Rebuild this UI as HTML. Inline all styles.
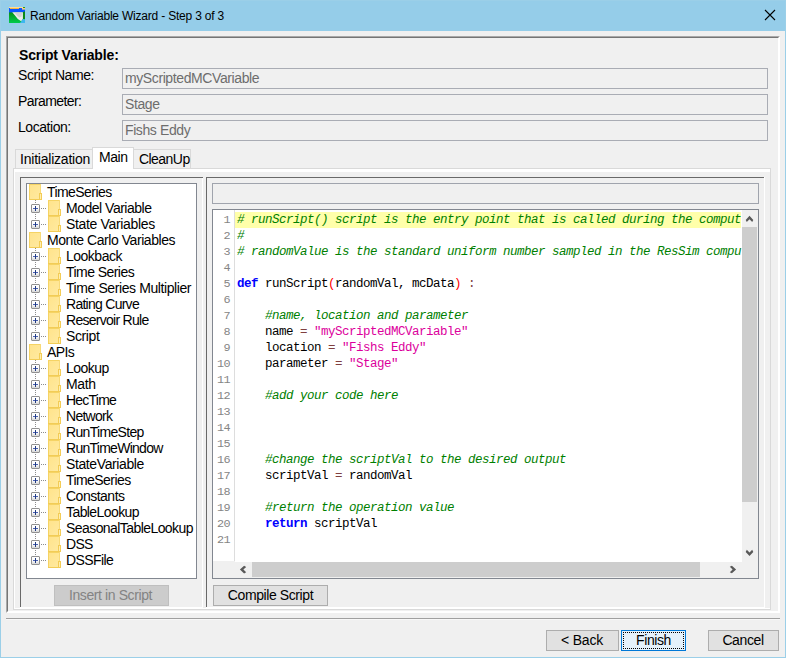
<!DOCTYPE html>
<html><head><meta charset="utf-8"><title>Random Variable Wizard - Step 3 of 3</title>
<style>
html,body{margin:0;padding:0;}
body{width:786px;height:658px;overflow:hidden;position:relative;background:#95cde9;font-family:"Liberation Sans",sans-serif;font-size:14px;letter-spacing:-0.4px;color:#000;}
div,svg{position:absolute;box-sizing:border-box;}
.client{left:1px;top:31px;width:784px;height:626px;background:#f0f0f0;}
.title{left:30px;top:7px;height:18px;line-height:18px;font-size:12px;letter-spacing:-0.2px;white-space:nowrap;}
.lbl{height:16px;line-height:16px;white-space:nowrap;}
.fld{left:122px;width:646px;height:21px;border:1px solid #a9acb4;background:#f0f0f0;color:#6d6d6d;line-height:19px;padding-left:2px;white-space:nowrap;}
.tab{top:149px;height:19px;border:1px solid #d9d9d9;border-bottom:none;background:#f0f0f0;line-height:18px;text-align:left;white-space:nowrap;}
.tl{height:16px;line-height:16px;white-space:nowrap;}
.fi{display:block;}
.dv{width:1px;--c:#8c8c8c;background:repeating-linear-gradient(to bottom,var(--c) 0,var(--c) 1px,transparent 1px,transparent 2px);}
.dh{height:1px;--c:#8c8c8c;background:repeating-linear-gradient(to right,var(--c) 0,var(--c) 1px,transparent 1px,transparent 2px);}
.btn{height:21px;border:1px solid #adadad;background:#e1e1e1;line-height:19px;text-align:center;white-space:nowrap;}
.mono{font-family:"Liberation Mono",monospace;font-size:12.5px;letter-spacing:-0.5px;}
.cl{position:relative;height:16px;line-height:16px;white-space:pre;}
.ln{position:relative;height:16px;line-height:16px;text-align:right;color:#858585;font-size:11.8px;letter-spacing:-0.6px;}
.c{color:#008000;font-style:italic;} .k{color:#0000ff;font-weight:bold;} .s{color:#dc009c;} .p{color:#ff0000;} .o{color:#804040;}
</style></head><body>
<svg style="left:0;top:0" width="0" height="0"><defs>
<linearGradient id="fg" x1="0" y1="0" x2="1" y2="1"><stop offset="0" stop-color="#ffe38a"/><stop offset="1" stop-color="#ffeaa2"/></linearGradient>
<linearGradient id="pg" x1="0" y1="0" x2="0" y2="1"><stop offset="0" stop-color="#ffffff"/><stop offset="0.5" stop-color="#fdfdfd"/><stop offset="1" stop-color="#d6d6d6"/></linearGradient>
</defs></svg>
<!-- title bar -->
<svg style="left:9px;top:7px" width="16" height="16" viewBox="0 0 16 16">
<defs><linearGradient id="ig" x1="0" y1="0" x2="0" y2="1"><stop offset="0.3" stop-color="#078c14"/><stop offset="1" stop-color="#00cc4c"/></linearGradient></defs>
<rect width="16" height="16" fill="url(#ig)"/>
<rect x="0" y="1" width="16" height="4.4" fill="#0a56ff"/>
<rect x="0" y="0" width="14" height="1" fill="#ffdc96"/>
<rect x="1" y="1" width="9" height="1" fill="#f3b544"/>
<rect x="13" y="1" width="3" height="1.6" fill="#ffcc74"/>
<rect x="14" y="0" width="2" height="1" fill="#259c25"/>
<polygon points="13.8,5.3 16,4.2 16,12.3 13.8,12.3" fill="#0a8a14"/>
<path d="M3.2 5.3 L13.9 5.3 L13.9 11.9 L12.2 14.3 Q8.6 12.6 5.6 7.9 Z" fill="#ececec"/>
<path d="M5.4 5.6 L13.2 5.6 L12.6 9.5 L10.2 10.6 Q7.6 8.6 5.4 5.6 Z" fill="#c9c9c9" opacity="0.75"/>
<path d="M12.2 14.3 L13.9 11.9 L16 12.2 L16 16 L10.6 16 Q12.2 15.6 12.2 14.3 Z" fill="#3db7ef"/>
</svg>
<div class="title">Random Variable Wizard - Step 3 of 3</div>
<svg style="left:764px;top:9px" width="12" height="12" viewBox="0 0 12 12"><path d="M1 1 L11 11 M11 1 L1 11" stroke="#000" stroke-width="1.1" fill="none"/></svg>

<div class="client"></div>
<div style="left:0;top:0;width:786px;height:658px;border:1px solid #9bcfe8;"></div>

<!-- outer lowered bevel -->
<div style="left:6px;top:36px;width:774px;height:577px;border-left:1px solid #a8a8a8;border-top:1px solid #a8a8a8;border-right:1px solid #fff;border-bottom:1px solid #fff;"></div>
<div style="left:7px;top:37px;width:772px;height:575px;border-left:1px solid #757575;border-top:1px solid #757575;border-right:1px solid #fff;border-bottom:1px solid #fff;"></div>

<div class="lbl" style="left:19px;top:47px;font-weight:bold;letter-spacing:-0.14px;">Script Variable:</div>
<div class="lbl" style="left:18px;top:67px;">Script Name:</div>
<div class="lbl" style="left:18px;top:93px;letter-spacing:-0.6px;">Parameter:</div>
<div class="lbl" style="left:18px;top:119px;letter-spacing:-0.45px;">Location:</div>
<div class="fld" style="top:68px;">myScriptedMCVariable</div>
<div class="fld" style="top:94px;">Stage</div>
<div class="fld" style="top:120px;">Fishs Eddy</div>

<!-- tabbed pane -->
<div style="left:13px;top:168px;width:758px;height:442px;border:1px solid #d9d9d9;background:#fff;"></div>
<div style="left:15px;top:172px;width:755px;height:436px;background:#f0f0f0;"></div>
<div class="tab" style="left:15px;width:78px;padding-left:4px;letter-spacing:-0.22px;">Initialization</div>
<div class="tab" style="left:134px;width:57px;padding-left:5px;border-left:none;letter-spacing:-0.55px;">CleanUp</div>
<div class="tab" style="left:92px;top:147px;width:42px;height:22px;background:#fff;line-height:19px;padding-left:6px;letter-spacing:-0.45px;">Main</div>

<!-- left panel (tree) -->
<div style="left:20px;top:607px;width:183px;height:1px;background:#fff;"></div>
<div style="left:202px;top:178px;width:1px;height:430px;background:#fff;"></div>
<div style="left:20px;top:177px;width:183px;height:1px;background:#696969;"></div>
<div style="left:20px;top:177px;width:1px;height:430px;background:#696969;"></div>
<div style="left:26px;top:183px;width:171px;height:396px;border:1px solid #828790;background:#fff;"></div>
<svg class="fi" style="left:29px;top:184px" width="13" height="16" viewBox="0 0 13 16"><rect x="0" y="0" width="12" height="16" fill="url(#fg)"/><rect x="0" y="0" width="12" height="1" fill="#f5d364"/><rect x="0" y="0" width="1" height="16" fill="#f5d364"/><rect x="11" y="0" width="1" height="9" fill="#f8da78"/><rect x="0" y="15" width="12" height="1" fill="#f2cc56"/><rect x="10" y="9" width="3" height="7" fill="#f3cc56"/><rect x="11" y="10" width="1" height="5" fill="#ffeeb0"/></svg>
<div class="tl" style="left:47px;top:184px;letter-spacing:-0.57px">TimeSeries</div>
<svg class="fi" style="left:48px;top:200px" width="13" height="16" viewBox="0 0 13 16"><rect x="0" y="0" width="12" height="16" fill="url(#fg)"/><rect x="0" y="0" width="12" height="1" fill="#f5d364"/><rect x="0" y="0" width="1" height="16" fill="#f5d364"/><rect x="11" y="0" width="1" height="9" fill="#f8da78"/><rect x="0" y="15" width="12" height="1" fill="#f2cc56"/><rect x="10" y="9" width="3" height="7" fill="#f3cc56"/><rect x="11" y="10" width="1" height="5" fill="#ffeeb0"/></svg>
<div class="tl" style="left:66px;top:200px;letter-spacing:-0.49px">Model Variable</div>
<svg class="fi" style="left:31px;top:204px" width="9" height="9" viewBox="0 0 9 9"><rect x="1" y="1" width="7" height="7" fill="url(#pg)"/><rect x="1" y="0" width="7" height="1" fill="#919191"/><rect x="1" y="8" width="7" height="1" fill="#919191"/><rect x="0" y="1" width="1" height="7" fill="#919191"/><rect x="8" y="1" width="1" height="7" fill="#919191"/><rect x="0" y="0" width="1" height="1" fill="#c9c9c9"/><rect x="8" y="0" width="1" height="1" fill="#c9c9c9"/><rect x="0" y="8" width="1" height="1" fill="#c9c9c9"/><rect x="8" y="8" width="1" height="1" fill="#c9c9c9"/><rect x="2" y="4" width="5" height="1" fill="#4a61b5"/><rect x="4" y="2" width="1" height="5" fill="#1f3a80"/></svg>
<div class="dv" style="left:35px;top:200px;height:4px"></div>
<div class="dv" style="left:35px;top:214px;height:1px"></div>
<div class="dh" style="left:41px;top:208px;width:6px"></div>
<svg class="fi" style="left:48px;top:216px" width="13" height="16" viewBox="0 0 13 16"><rect x="0" y="0" width="12" height="16" fill="url(#fg)"/><rect x="0" y="0" width="12" height="1" fill="#f5d364"/><rect x="0" y="0" width="1" height="16" fill="#f5d364"/><rect x="11" y="0" width="1" height="9" fill="#f8da78"/><rect x="0" y="15" width="12" height="1" fill="#f2cc56"/><rect x="10" y="9" width="3" height="7" fill="#f3cc56"/><rect x="11" y="10" width="1" height="5" fill="#ffeeb0"/></svg>
<div class="tl" style="left:66px;top:216px;letter-spacing:-0.34px">State Variables</div>
<svg class="fi" style="left:31px;top:220px" width="9" height="9" viewBox="0 0 9 9"><rect x="1" y="1" width="7" height="7" fill="url(#pg)"/><rect x="1" y="0" width="7" height="1" fill="#919191"/><rect x="1" y="8" width="7" height="1" fill="#919191"/><rect x="0" y="1" width="1" height="7" fill="#919191"/><rect x="8" y="1" width="1" height="7" fill="#919191"/><rect x="0" y="0" width="1" height="1" fill="#c9c9c9"/><rect x="8" y="0" width="1" height="1" fill="#c9c9c9"/><rect x="0" y="8" width="1" height="1" fill="#c9c9c9"/><rect x="8" y="8" width="1" height="1" fill="#c9c9c9"/><rect x="2" y="4" width="5" height="1" fill="#4a61b5"/><rect x="4" y="2" width="1" height="5" fill="#1f3a80"/></svg>
<div class="dv" style="left:35px;top:216px;height:4px"></div>
<div class="dh" style="left:41px;top:224px;width:6px"></div>
<svg class="fi" style="left:29px;top:232px" width="13" height="16" viewBox="0 0 13 16"><rect x="0" y="0" width="12" height="16" fill="url(#fg)"/><rect x="0" y="0" width="12" height="1" fill="#f5d364"/><rect x="0" y="0" width="1" height="16" fill="#f5d364"/><rect x="11" y="0" width="1" height="9" fill="#f8da78"/><rect x="0" y="15" width="12" height="1" fill="#f2cc56"/><rect x="10" y="9" width="3" height="7" fill="#f3cc56"/><rect x="11" y="10" width="1" height="5" fill="#ffeeb0"/></svg>
<div class="tl" style="left:47px;top:232px;letter-spacing:-0.45px">Monte Carlo Variables</div>
<svg class="fi" style="left:48px;top:248px" width="13" height="16" viewBox="0 0 13 16"><rect x="0" y="0" width="12" height="16" fill="url(#fg)"/><rect x="0" y="0" width="12" height="1" fill="#f5d364"/><rect x="0" y="0" width="1" height="16" fill="#f5d364"/><rect x="11" y="0" width="1" height="9" fill="#f8da78"/><rect x="0" y="15" width="12" height="1" fill="#f2cc56"/><rect x="10" y="9" width="3" height="7" fill="#f3cc56"/><rect x="11" y="10" width="1" height="5" fill="#ffeeb0"/></svg>
<div class="tl" style="left:66px;top:248px;letter-spacing:-0.50px">Lookback</div>
<svg class="fi" style="left:31px;top:252px" width="9" height="9" viewBox="0 0 9 9"><rect x="1" y="1" width="7" height="7" fill="url(#pg)"/><rect x="1" y="0" width="7" height="1" fill="#919191"/><rect x="1" y="8" width="7" height="1" fill="#919191"/><rect x="0" y="1" width="1" height="7" fill="#919191"/><rect x="8" y="1" width="1" height="7" fill="#919191"/><rect x="0" y="0" width="1" height="1" fill="#c9c9c9"/><rect x="8" y="0" width="1" height="1" fill="#c9c9c9"/><rect x="0" y="8" width="1" height="1" fill="#c9c9c9"/><rect x="8" y="8" width="1" height="1" fill="#c9c9c9"/><rect x="2" y="4" width="5" height="1" fill="#4a61b5"/><rect x="4" y="2" width="1" height="5" fill="#1f3a80"/></svg>
<div class="dv" style="left:35px;top:248px;height:4px"></div>
<div class="dv" style="left:35px;top:262px;height:1px"></div>
<div class="dh" style="left:41px;top:256px;width:6px"></div>
<svg class="fi" style="left:48px;top:264px" width="13" height="16" viewBox="0 0 13 16"><rect x="0" y="0" width="12" height="16" fill="url(#fg)"/><rect x="0" y="0" width="12" height="1" fill="#f5d364"/><rect x="0" y="0" width="1" height="16" fill="#f5d364"/><rect x="11" y="0" width="1" height="9" fill="#f8da78"/><rect x="0" y="15" width="12" height="1" fill="#f2cc56"/><rect x="10" y="9" width="3" height="7" fill="#f3cc56"/><rect x="11" y="10" width="1" height="5" fill="#ffeeb0"/></svg>
<div class="tl" style="left:66px;top:264px;letter-spacing:-0.55px">Time Series</div>
<svg class="fi" style="left:31px;top:268px" width="9" height="9" viewBox="0 0 9 9"><rect x="1" y="1" width="7" height="7" fill="url(#pg)"/><rect x="1" y="0" width="7" height="1" fill="#919191"/><rect x="1" y="8" width="7" height="1" fill="#919191"/><rect x="0" y="1" width="1" height="7" fill="#919191"/><rect x="8" y="1" width="1" height="7" fill="#919191"/><rect x="0" y="0" width="1" height="1" fill="#c9c9c9"/><rect x="8" y="0" width="1" height="1" fill="#c9c9c9"/><rect x="0" y="8" width="1" height="1" fill="#c9c9c9"/><rect x="8" y="8" width="1" height="1" fill="#c9c9c9"/><rect x="2" y="4" width="5" height="1" fill="#4a61b5"/><rect x="4" y="2" width="1" height="5" fill="#1f3a80"/></svg>
<div class="dv" style="left:35px;top:264px;height:4px"></div>
<div class="dv" style="left:35px;top:278px;height:1px"></div>
<div class="dh" style="left:41px;top:272px;width:6px"></div>
<svg class="fi" style="left:48px;top:280px" width="13" height="16" viewBox="0 0 13 16"><rect x="0" y="0" width="12" height="16" fill="url(#fg)"/><rect x="0" y="0" width="12" height="1" fill="#f5d364"/><rect x="0" y="0" width="1" height="16" fill="#f5d364"/><rect x="11" y="0" width="1" height="9" fill="#f8da78"/><rect x="0" y="15" width="12" height="1" fill="#f2cc56"/><rect x="10" y="9" width="3" height="7" fill="#f3cc56"/><rect x="11" y="10" width="1" height="5" fill="#ffeeb0"/></svg>
<div class="tl" style="left:66px;top:280px;letter-spacing:-0.41px">Time Series Multiplier</div>
<svg class="fi" style="left:31px;top:284px" width="9" height="9" viewBox="0 0 9 9"><rect x="1" y="1" width="7" height="7" fill="url(#pg)"/><rect x="1" y="0" width="7" height="1" fill="#919191"/><rect x="1" y="8" width="7" height="1" fill="#919191"/><rect x="0" y="1" width="1" height="7" fill="#919191"/><rect x="8" y="1" width="1" height="7" fill="#919191"/><rect x="0" y="0" width="1" height="1" fill="#c9c9c9"/><rect x="8" y="0" width="1" height="1" fill="#c9c9c9"/><rect x="0" y="8" width="1" height="1" fill="#c9c9c9"/><rect x="8" y="8" width="1" height="1" fill="#c9c9c9"/><rect x="2" y="4" width="5" height="1" fill="#4a61b5"/><rect x="4" y="2" width="1" height="5" fill="#1f3a80"/></svg>
<div class="dv" style="left:35px;top:280px;height:4px"></div>
<div class="dv" style="left:35px;top:294px;height:1px"></div>
<div class="dh" style="left:41px;top:288px;width:6px"></div>
<svg class="fi" style="left:48px;top:296px" width="13" height="16" viewBox="0 0 13 16"><rect x="0" y="0" width="12" height="16" fill="url(#fg)"/><rect x="0" y="0" width="12" height="1" fill="#f5d364"/><rect x="0" y="0" width="1" height="16" fill="#f5d364"/><rect x="11" y="0" width="1" height="9" fill="#f8da78"/><rect x="0" y="15" width="12" height="1" fill="#f2cc56"/><rect x="10" y="9" width="3" height="7" fill="#f3cc56"/><rect x="11" y="10" width="1" height="5" fill="#ffeeb0"/></svg>
<div class="tl" style="left:66px;top:296px;letter-spacing:-0.73px">Rating Curve</div>
<svg class="fi" style="left:31px;top:300px" width="9" height="9" viewBox="0 0 9 9"><rect x="1" y="1" width="7" height="7" fill="url(#pg)"/><rect x="1" y="0" width="7" height="1" fill="#919191"/><rect x="1" y="8" width="7" height="1" fill="#919191"/><rect x="0" y="1" width="1" height="7" fill="#919191"/><rect x="8" y="1" width="1" height="7" fill="#919191"/><rect x="0" y="0" width="1" height="1" fill="#c9c9c9"/><rect x="8" y="0" width="1" height="1" fill="#c9c9c9"/><rect x="0" y="8" width="1" height="1" fill="#c9c9c9"/><rect x="8" y="8" width="1" height="1" fill="#c9c9c9"/><rect x="2" y="4" width="5" height="1" fill="#4a61b5"/><rect x="4" y="2" width="1" height="5" fill="#1f3a80"/></svg>
<div class="dv" style="left:35px;top:296px;height:4px"></div>
<div class="dv" style="left:35px;top:310px;height:1px"></div>
<div class="dh" style="left:41px;top:304px;width:6px"></div>
<svg class="fi" style="left:48px;top:312px" width="13" height="16" viewBox="0 0 13 16"><rect x="0" y="0" width="12" height="16" fill="url(#fg)"/><rect x="0" y="0" width="12" height="1" fill="#f5d364"/><rect x="0" y="0" width="1" height="16" fill="#f5d364"/><rect x="11" y="0" width="1" height="9" fill="#f8da78"/><rect x="0" y="15" width="12" height="1" fill="#f2cc56"/><rect x="10" y="9" width="3" height="7" fill="#f3cc56"/><rect x="11" y="10" width="1" height="5" fill="#ffeeb0"/></svg>
<div class="tl" style="left:66px;top:312px;letter-spacing:-0.72px">Reservoir Rule</div>
<svg class="fi" style="left:31px;top:316px" width="9" height="9" viewBox="0 0 9 9"><rect x="1" y="1" width="7" height="7" fill="url(#pg)"/><rect x="1" y="0" width="7" height="1" fill="#919191"/><rect x="1" y="8" width="7" height="1" fill="#919191"/><rect x="0" y="1" width="1" height="7" fill="#919191"/><rect x="8" y="1" width="1" height="7" fill="#919191"/><rect x="0" y="0" width="1" height="1" fill="#c9c9c9"/><rect x="8" y="0" width="1" height="1" fill="#c9c9c9"/><rect x="0" y="8" width="1" height="1" fill="#c9c9c9"/><rect x="8" y="8" width="1" height="1" fill="#c9c9c9"/><rect x="2" y="4" width="5" height="1" fill="#4a61b5"/><rect x="4" y="2" width="1" height="5" fill="#1f3a80"/></svg>
<div class="dv" style="left:35px;top:312px;height:4px"></div>
<div class="dv" style="left:35px;top:326px;height:1px"></div>
<div class="dh" style="left:41px;top:320px;width:6px"></div>
<svg class="fi" style="left:48px;top:328px" width="13" height="16" viewBox="0 0 13 16"><rect x="0" y="0" width="12" height="16" fill="url(#fg)"/><rect x="0" y="0" width="12" height="1" fill="#f5d364"/><rect x="0" y="0" width="1" height="16" fill="#f5d364"/><rect x="11" y="0" width="1" height="9" fill="#f8da78"/><rect x="0" y="15" width="12" height="1" fill="#f2cc56"/><rect x="10" y="9" width="3" height="7" fill="#f3cc56"/><rect x="11" y="10" width="1" height="5" fill="#ffeeb0"/></svg>
<div class="tl" style="left:66px;top:328px;letter-spacing:-0.38px">Script</div>
<svg class="fi" style="left:31px;top:332px" width="9" height="9" viewBox="0 0 9 9"><rect x="1" y="1" width="7" height="7" fill="url(#pg)"/><rect x="1" y="0" width="7" height="1" fill="#919191"/><rect x="1" y="8" width="7" height="1" fill="#919191"/><rect x="0" y="1" width="1" height="7" fill="#919191"/><rect x="8" y="1" width="1" height="7" fill="#919191"/><rect x="0" y="0" width="1" height="1" fill="#c9c9c9"/><rect x="8" y="0" width="1" height="1" fill="#c9c9c9"/><rect x="0" y="8" width="1" height="1" fill="#c9c9c9"/><rect x="8" y="8" width="1" height="1" fill="#c9c9c9"/><rect x="2" y="4" width="5" height="1" fill="#4a61b5"/><rect x="4" y="2" width="1" height="5" fill="#1f3a80"/></svg>
<div class="dv" style="left:35px;top:328px;height:4px"></div>
<div class="dh" style="left:41px;top:336px;width:6px"></div>
<svg class="fi" style="left:29px;top:344px" width="13" height="16" viewBox="0 0 13 16"><rect x="0" y="0" width="12" height="16" fill="url(#fg)"/><rect x="0" y="0" width="12" height="1" fill="#f5d364"/><rect x="0" y="0" width="1" height="16" fill="#f5d364"/><rect x="11" y="0" width="1" height="9" fill="#f8da78"/><rect x="0" y="15" width="12" height="1" fill="#f2cc56"/><rect x="10" y="9" width="3" height="7" fill="#f3cc56"/><rect x="11" y="10" width="1" height="5" fill="#ffeeb0"/></svg>
<div class="tl" style="left:47px;top:344px;letter-spacing:-0.57px">APIs</div>
<svg class="fi" style="left:48px;top:360px" width="13" height="16" viewBox="0 0 13 16"><rect x="0" y="0" width="12" height="16" fill="url(#fg)"/><rect x="0" y="0" width="12" height="1" fill="#f5d364"/><rect x="0" y="0" width="1" height="16" fill="#f5d364"/><rect x="11" y="0" width="1" height="9" fill="#f8da78"/><rect x="0" y="15" width="12" height="1" fill="#f2cc56"/><rect x="10" y="9" width="3" height="7" fill="#f3cc56"/><rect x="11" y="10" width="1" height="5" fill="#ffeeb0"/></svg>
<div class="tl" style="left:66px;top:360px;letter-spacing:-0.54px">Lookup</div>
<svg class="fi" style="left:31px;top:364px" width="9" height="9" viewBox="0 0 9 9"><rect x="1" y="1" width="7" height="7" fill="url(#pg)"/><rect x="1" y="0" width="7" height="1" fill="#919191"/><rect x="1" y="8" width="7" height="1" fill="#919191"/><rect x="0" y="1" width="1" height="7" fill="#919191"/><rect x="8" y="1" width="1" height="7" fill="#919191"/><rect x="0" y="0" width="1" height="1" fill="#c9c9c9"/><rect x="8" y="0" width="1" height="1" fill="#c9c9c9"/><rect x="0" y="8" width="1" height="1" fill="#c9c9c9"/><rect x="8" y="8" width="1" height="1" fill="#c9c9c9"/><rect x="2" y="4" width="5" height="1" fill="#4a61b5"/><rect x="4" y="2" width="1" height="5" fill="#1f3a80"/></svg>
<div class="dv" style="left:35px;top:360px;height:4px"></div>
<div class="dv" style="left:35px;top:374px;height:1px"></div>
<div class="dh" style="left:41px;top:368px;width:6px"></div>
<svg class="fi" style="left:48px;top:376px" width="13" height="16" viewBox="0 0 13 16"><rect x="0" y="0" width="12" height="16" fill="url(#fg)"/><rect x="0" y="0" width="12" height="1" fill="#f5d364"/><rect x="0" y="0" width="1" height="16" fill="#f5d364"/><rect x="11" y="0" width="1" height="9" fill="#f8da78"/><rect x="0" y="15" width="12" height="1" fill="#f2cc56"/><rect x="10" y="9" width="3" height="7" fill="#f3cc56"/><rect x="11" y="10" width="1" height="5" fill="#ffeeb0"/></svg>
<div class="tl" style="left:66px;top:376px;letter-spacing:-0.37px">Math</div>
<svg class="fi" style="left:31px;top:380px" width="9" height="9" viewBox="0 0 9 9"><rect x="1" y="1" width="7" height="7" fill="url(#pg)"/><rect x="1" y="0" width="7" height="1" fill="#919191"/><rect x="1" y="8" width="7" height="1" fill="#919191"/><rect x="0" y="1" width="1" height="7" fill="#919191"/><rect x="8" y="1" width="1" height="7" fill="#919191"/><rect x="0" y="0" width="1" height="1" fill="#c9c9c9"/><rect x="8" y="0" width="1" height="1" fill="#c9c9c9"/><rect x="0" y="8" width="1" height="1" fill="#c9c9c9"/><rect x="8" y="8" width="1" height="1" fill="#c9c9c9"/><rect x="2" y="4" width="5" height="1" fill="#4a61b5"/><rect x="4" y="2" width="1" height="5" fill="#1f3a80"/></svg>
<div class="dv" style="left:35px;top:376px;height:4px"></div>
<div class="dv" style="left:35px;top:390px;height:1px"></div>
<div class="dh" style="left:41px;top:384px;width:6px"></div>
<svg class="fi" style="left:48px;top:392px" width="13" height="16" viewBox="0 0 13 16"><rect x="0" y="0" width="12" height="16" fill="url(#fg)"/><rect x="0" y="0" width="12" height="1" fill="#f5d364"/><rect x="0" y="0" width="1" height="16" fill="#f5d364"/><rect x="11" y="0" width="1" height="9" fill="#f8da78"/><rect x="0" y="15" width="12" height="1" fill="#f2cc56"/><rect x="10" y="9" width="3" height="7" fill="#f3cc56"/><rect x="11" y="10" width="1" height="5" fill="#ffeeb0"/></svg>
<div class="tl" style="left:66px;top:392px;letter-spacing:-0.77px">HecTime</div>
<svg class="fi" style="left:31px;top:396px" width="9" height="9" viewBox="0 0 9 9"><rect x="1" y="1" width="7" height="7" fill="url(#pg)"/><rect x="1" y="0" width="7" height="1" fill="#919191"/><rect x="1" y="8" width="7" height="1" fill="#919191"/><rect x="0" y="1" width="1" height="7" fill="#919191"/><rect x="8" y="1" width="1" height="7" fill="#919191"/><rect x="0" y="0" width="1" height="1" fill="#c9c9c9"/><rect x="8" y="0" width="1" height="1" fill="#c9c9c9"/><rect x="0" y="8" width="1" height="1" fill="#c9c9c9"/><rect x="8" y="8" width="1" height="1" fill="#c9c9c9"/><rect x="2" y="4" width="5" height="1" fill="#4a61b5"/><rect x="4" y="2" width="1" height="5" fill="#1f3a80"/></svg>
<div class="dv" style="left:35px;top:392px;height:4px"></div>
<div class="dv" style="left:35px;top:406px;height:1px"></div>
<div class="dh" style="left:41px;top:400px;width:6px"></div>
<svg class="fi" style="left:48px;top:408px" width="13" height="16" viewBox="0 0 13 16"><rect x="0" y="0" width="12" height="16" fill="url(#fg)"/><rect x="0" y="0" width="12" height="1" fill="#f5d364"/><rect x="0" y="0" width="1" height="16" fill="#f5d364"/><rect x="11" y="0" width="1" height="9" fill="#f8da78"/><rect x="0" y="15" width="12" height="1" fill="#f2cc56"/><rect x="10" y="9" width="3" height="7" fill="#f3cc56"/><rect x="11" y="10" width="1" height="5" fill="#ffeeb0"/></svg>
<div class="tl" style="left:66px;top:408px;letter-spacing:-0.73px">Network</div>
<svg class="fi" style="left:31px;top:412px" width="9" height="9" viewBox="0 0 9 9"><rect x="1" y="1" width="7" height="7" fill="url(#pg)"/><rect x="1" y="0" width="7" height="1" fill="#919191"/><rect x="1" y="8" width="7" height="1" fill="#919191"/><rect x="0" y="1" width="1" height="7" fill="#919191"/><rect x="8" y="1" width="1" height="7" fill="#919191"/><rect x="0" y="0" width="1" height="1" fill="#c9c9c9"/><rect x="8" y="0" width="1" height="1" fill="#c9c9c9"/><rect x="0" y="8" width="1" height="1" fill="#c9c9c9"/><rect x="8" y="8" width="1" height="1" fill="#c9c9c9"/><rect x="2" y="4" width="5" height="1" fill="#4a61b5"/><rect x="4" y="2" width="1" height="5" fill="#1f3a80"/></svg>
<div class="dv" style="left:35px;top:408px;height:4px"></div>
<div class="dv" style="left:35px;top:422px;height:1px"></div>
<div class="dh" style="left:41px;top:416px;width:6px"></div>
<svg class="fi" style="left:48px;top:424px" width="13" height="16" viewBox="0 0 13 16"><rect x="0" y="0" width="12" height="16" fill="url(#fg)"/><rect x="0" y="0" width="12" height="1" fill="#f5d364"/><rect x="0" y="0" width="1" height="16" fill="#f5d364"/><rect x="11" y="0" width="1" height="9" fill="#f8da78"/><rect x="0" y="15" width="12" height="1" fill="#f2cc56"/><rect x="10" y="9" width="3" height="7" fill="#f3cc56"/><rect x="11" y="10" width="1" height="5" fill="#ffeeb0"/></svg>
<div class="tl" style="left:66px;top:424px;letter-spacing:-0.67px">RunTimeStep</div>
<svg class="fi" style="left:31px;top:428px" width="9" height="9" viewBox="0 0 9 9"><rect x="1" y="1" width="7" height="7" fill="url(#pg)"/><rect x="1" y="0" width="7" height="1" fill="#919191"/><rect x="1" y="8" width="7" height="1" fill="#919191"/><rect x="0" y="1" width="1" height="7" fill="#919191"/><rect x="8" y="1" width="1" height="7" fill="#919191"/><rect x="0" y="0" width="1" height="1" fill="#c9c9c9"/><rect x="8" y="0" width="1" height="1" fill="#c9c9c9"/><rect x="0" y="8" width="1" height="1" fill="#c9c9c9"/><rect x="8" y="8" width="1" height="1" fill="#c9c9c9"/><rect x="2" y="4" width="5" height="1" fill="#4a61b5"/><rect x="4" y="2" width="1" height="5" fill="#1f3a80"/></svg>
<div class="dv" style="left:35px;top:424px;height:4px"></div>
<div class="dv" style="left:35px;top:438px;height:1px"></div>
<div class="dh" style="left:41px;top:432px;width:6px"></div>
<svg class="fi" style="left:48px;top:440px" width="13" height="16" viewBox="0 0 13 16"><rect x="0" y="0" width="12" height="16" fill="url(#fg)"/><rect x="0" y="0" width="12" height="1" fill="#f5d364"/><rect x="0" y="0" width="1" height="16" fill="#f5d364"/><rect x="11" y="0" width="1" height="9" fill="#f8da78"/><rect x="0" y="15" width="12" height="1" fill="#f2cc56"/><rect x="10" y="9" width="3" height="7" fill="#f3cc56"/><rect x="11" y="10" width="1" height="5" fill="#ffeeb0"/></svg>
<div class="tl" style="left:66px;top:440px;letter-spacing:-0.73px">RunTimeWindow</div>
<svg class="fi" style="left:31px;top:444px" width="9" height="9" viewBox="0 0 9 9"><rect x="1" y="1" width="7" height="7" fill="url(#pg)"/><rect x="1" y="0" width="7" height="1" fill="#919191"/><rect x="1" y="8" width="7" height="1" fill="#919191"/><rect x="0" y="1" width="1" height="7" fill="#919191"/><rect x="8" y="1" width="1" height="7" fill="#919191"/><rect x="0" y="0" width="1" height="1" fill="#c9c9c9"/><rect x="8" y="0" width="1" height="1" fill="#c9c9c9"/><rect x="0" y="8" width="1" height="1" fill="#c9c9c9"/><rect x="8" y="8" width="1" height="1" fill="#c9c9c9"/><rect x="2" y="4" width="5" height="1" fill="#4a61b5"/><rect x="4" y="2" width="1" height="5" fill="#1f3a80"/></svg>
<div class="dv" style="left:35px;top:440px;height:4px"></div>
<div class="dv" style="left:35px;top:454px;height:1px"></div>
<div class="dh" style="left:41px;top:448px;width:6px"></div>
<svg class="fi" style="left:48px;top:456px" width="13" height="16" viewBox="0 0 13 16"><rect x="0" y="0" width="12" height="16" fill="url(#fg)"/><rect x="0" y="0" width="12" height="1" fill="#f5d364"/><rect x="0" y="0" width="1" height="16" fill="#f5d364"/><rect x="11" y="0" width="1" height="9" fill="#f8da78"/><rect x="0" y="15" width="12" height="1" fill="#f2cc56"/><rect x="10" y="9" width="3" height="7" fill="#f3cc56"/><rect x="11" y="10" width="1" height="5" fill="#ffeeb0"/></svg>
<div class="tl" style="left:66px;top:456px;letter-spacing:-0.39px">StateVariable</div>
<svg class="fi" style="left:31px;top:460px" width="9" height="9" viewBox="0 0 9 9"><rect x="1" y="1" width="7" height="7" fill="url(#pg)"/><rect x="1" y="0" width="7" height="1" fill="#919191"/><rect x="1" y="8" width="7" height="1" fill="#919191"/><rect x="0" y="1" width="1" height="7" fill="#919191"/><rect x="8" y="1" width="1" height="7" fill="#919191"/><rect x="0" y="0" width="1" height="1" fill="#c9c9c9"/><rect x="8" y="0" width="1" height="1" fill="#c9c9c9"/><rect x="0" y="8" width="1" height="1" fill="#c9c9c9"/><rect x="8" y="8" width="1" height="1" fill="#c9c9c9"/><rect x="2" y="4" width="5" height="1" fill="#4a61b5"/><rect x="4" y="2" width="1" height="5" fill="#1f3a80"/></svg>
<div class="dv" style="left:35px;top:456px;height:4px"></div>
<div class="dv" style="left:35px;top:470px;height:1px"></div>
<div class="dh" style="left:41px;top:464px;width:6px"></div>
<svg class="fi" style="left:48px;top:472px" width="13" height="16" viewBox="0 0 13 16"><rect x="0" y="0" width="12" height="16" fill="url(#fg)"/><rect x="0" y="0" width="12" height="1" fill="#f5d364"/><rect x="0" y="0" width="1" height="16" fill="#f5d364"/><rect x="11" y="0" width="1" height="9" fill="#f8da78"/><rect x="0" y="15" width="12" height="1" fill="#f2cc56"/><rect x="10" y="9" width="3" height="7" fill="#f3cc56"/><rect x="11" y="10" width="1" height="5" fill="#ffeeb0"/></svg>
<div class="tl" style="left:66px;top:472px;letter-spacing:-0.57px">TimeSeries</div>
<svg class="fi" style="left:31px;top:476px" width="9" height="9" viewBox="0 0 9 9"><rect x="1" y="1" width="7" height="7" fill="url(#pg)"/><rect x="1" y="0" width="7" height="1" fill="#919191"/><rect x="1" y="8" width="7" height="1" fill="#919191"/><rect x="0" y="1" width="1" height="7" fill="#919191"/><rect x="8" y="1" width="1" height="7" fill="#919191"/><rect x="0" y="0" width="1" height="1" fill="#c9c9c9"/><rect x="8" y="0" width="1" height="1" fill="#c9c9c9"/><rect x="0" y="8" width="1" height="1" fill="#c9c9c9"/><rect x="8" y="8" width="1" height="1" fill="#c9c9c9"/><rect x="2" y="4" width="5" height="1" fill="#4a61b5"/><rect x="4" y="2" width="1" height="5" fill="#1f3a80"/></svg>
<div class="dv" style="left:35px;top:472px;height:4px"></div>
<div class="dv" style="left:35px;top:486px;height:1px"></div>
<div class="dh" style="left:41px;top:480px;width:6px"></div>
<svg class="fi" style="left:48px;top:488px" width="13" height="16" viewBox="0 0 13 16"><rect x="0" y="0" width="12" height="16" fill="url(#fg)"/><rect x="0" y="0" width="12" height="1" fill="#f5d364"/><rect x="0" y="0" width="1" height="16" fill="#f5d364"/><rect x="11" y="0" width="1" height="9" fill="#f8da78"/><rect x="0" y="15" width="12" height="1" fill="#f2cc56"/><rect x="10" y="9" width="3" height="7" fill="#f3cc56"/><rect x="11" y="10" width="1" height="5" fill="#ffeeb0"/></svg>
<div class="tl" style="left:66px;top:488px;letter-spacing:-0.50px">Constants</div>
<svg class="fi" style="left:31px;top:492px" width="9" height="9" viewBox="0 0 9 9"><rect x="1" y="1" width="7" height="7" fill="url(#pg)"/><rect x="1" y="0" width="7" height="1" fill="#919191"/><rect x="1" y="8" width="7" height="1" fill="#919191"/><rect x="0" y="1" width="1" height="7" fill="#919191"/><rect x="8" y="1" width="1" height="7" fill="#919191"/><rect x="0" y="0" width="1" height="1" fill="#c9c9c9"/><rect x="8" y="0" width="1" height="1" fill="#c9c9c9"/><rect x="0" y="8" width="1" height="1" fill="#c9c9c9"/><rect x="8" y="8" width="1" height="1" fill="#c9c9c9"/><rect x="2" y="4" width="5" height="1" fill="#4a61b5"/><rect x="4" y="2" width="1" height="5" fill="#1f3a80"/></svg>
<div class="dv" style="left:35px;top:488px;height:4px"></div>
<div class="dv" style="left:35px;top:502px;height:1px"></div>
<div class="dh" style="left:41px;top:496px;width:6px"></div>
<svg class="fi" style="left:48px;top:504px" width="13" height="16" viewBox="0 0 13 16"><rect x="0" y="0" width="12" height="16" fill="url(#fg)"/><rect x="0" y="0" width="12" height="1" fill="#f5d364"/><rect x="0" y="0" width="1" height="16" fill="#f5d364"/><rect x="11" y="0" width="1" height="9" fill="#f8da78"/><rect x="0" y="15" width="12" height="1" fill="#f2cc56"/><rect x="10" y="9" width="3" height="7" fill="#f3cc56"/><rect x="11" y="10" width="1" height="5" fill="#ffeeb0"/></svg>
<div class="tl" style="left:66px;top:504px;letter-spacing:-0.58px">TableLookup</div>
<svg class="fi" style="left:31px;top:508px" width="9" height="9" viewBox="0 0 9 9"><rect x="1" y="1" width="7" height="7" fill="url(#pg)"/><rect x="1" y="0" width="7" height="1" fill="#919191"/><rect x="1" y="8" width="7" height="1" fill="#919191"/><rect x="0" y="1" width="1" height="7" fill="#919191"/><rect x="8" y="1" width="1" height="7" fill="#919191"/><rect x="0" y="0" width="1" height="1" fill="#c9c9c9"/><rect x="8" y="0" width="1" height="1" fill="#c9c9c9"/><rect x="0" y="8" width="1" height="1" fill="#c9c9c9"/><rect x="8" y="8" width="1" height="1" fill="#c9c9c9"/><rect x="2" y="4" width="5" height="1" fill="#4a61b5"/><rect x="4" y="2" width="1" height="5" fill="#1f3a80"/></svg>
<div class="dv" style="left:35px;top:504px;height:4px"></div>
<div class="dv" style="left:35px;top:518px;height:1px"></div>
<div class="dh" style="left:41px;top:512px;width:6px"></div>
<svg class="fi" style="left:48px;top:520px" width="13" height="16" viewBox="0 0 13 16"><rect x="0" y="0" width="12" height="16" fill="url(#fg)"/><rect x="0" y="0" width="12" height="1" fill="#f5d364"/><rect x="0" y="0" width="1" height="16" fill="#f5d364"/><rect x="11" y="0" width="1" height="9" fill="#f8da78"/><rect x="0" y="15" width="12" height="1" fill="#f2cc56"/><rect x="10" y="9" width="3" height="7" fill="#f3cc56"/><rect x="11" y="10" width="1" height="5" fill="#ffeeb0"/></svg>
<div class="tl" style="left:66px;top:520px;letter-spacing:-0.57px">SeasonalTableLookup</div>
<svg class="fi" style="left:31px;top:524px" width="9" height="9" viewBox="0 0 9 9"><rect x="1" y="1" width="7" height="7" fill="url(#pg)"/><rect x="1" y="0" width="7" height="1" fill="#919191"/><rect x="1" y="8" width="7" height="1" fill="#919191"/><rect x="0" y="1" width="1" height="7" fill="#919191"/><rect x="8" y="1" width="1" height="7" fill="#919191"/><rect x="0" y="0" width="1" height="1" fill="#c9c9c9"/><rect x="8" y="0" width="1" height="1" fill="#c9c9c9"/><rect x="0" y="8" width="1" height="1" fill="#c9c9c9"/><rect x="8" y="8" width="1" height="1" fill="#c9c9c9"/><rect x="2" y="4" width="5" height="1" fill="#4a61b5"/><rect x="4" y="2" width="1" height="5" fill="#1f3a80"/></svg>
<div class="dv" style="left:35px;top:520px;height:4px"></div>
<div class="dv" style="left:35px;top:534px;height:1px"></div>
<div class="dh" style="left:41px;top:528px;width:6px"></div>
<svg class="fi" style="left:48px;top:536px" width="13" height="16" viewBox="0 0 13 16"><rect x="0" y="0" width="12" height="16" fill="url(#fg)"/><rect x="0" y="0" width="12" height="1" fill="#f5d364"/><rect x="0" y="0" width="1" height="16" fill="#f5d364"/><rect x="11" y="0" width="1" height="9" fill="#f8da78"/><rect x="0" y="15" width="12" height="1" fill="#f2cc56"/><rect x="10" y="9" width="3" height="7" fill="#f3cc56"/><rect x="11" y="10" width="1" height="5" fill="#ffeeb0"/></svg>
<div class="tl" style="left:66px;top:536px;letter-spacing:-0.70px">DSS</div>
<svg class="fi" style="left:31px;top:540px" width="9" height="9" viewBox="0 0 9 9"><rect x="1" y="1" width="7" height="7" fill="url(#pg)"/><rect x="1" y="0" width="7" height="1" fill="#919191"/><rect x="1" y="8" width="7" height="1" fill="#919191"/><rect x="0" y="1" width="1" height="7" fill="#919191"/><rect x="8" y="1" width="1" height="7" fill="#919191"/><rect x="0" y="0" width="1" height="1" fill="#c9c9c9"/><rect x="8" y="0" width="1" height="1" fill="#c9c9c9"/><rect x="0" y="8" width="1" height="1" fill="#c9c9c9"/><rect x="8" y="8" width="1" height="1" fill="#c9c9c9"/><rect x="2" y="4" width="5" height="1" fill="#4a61b5"/><rect x="4" y="2" width="1" height="5" fill="#1f3a80"/></svg>
<div class="dv" style="left:35px;top:536px;height:4px"></div>
<div class="dv" style="left:35px;top:550px;height:1px"></div>
<div class="dh" style="left:41px;top:544px;width:6px"></div>
<svg class="fi" style="left:48px;top:552px" width="13" height="16" viewBox="0 0 13 16"><rect x="0" y="0" width="12" height="16" fill="url(#fg)"/><rect x="0" y="0" width="12" height="1" fill="#f5d364"/><rect x="0" y="0" width="1" height="16" fill="#f5d364"/><rect x="11" y="0" width="1" height="9" fill="#f8da78"/><rect x="0" y="15" width="12" height="1" fill="#f2cc56"/><rect x="10" y="9" width="3" height="7" fill="#f3cc56"/><rect x="11" y="10" width="1" height="5" fill="#ffeeb0"/></svg>
<div class="tl" style="left:66px;top:552px;letter-spacing:-0.60px">DSSFile</div>
<svg class="fi" style="left:31px;top:556px" width="9" height="9" viewBox="0 0 9 9"><rect x="1" y="1" width="7" height="7" fill="url(#pg)"/><rect x="1" y="0" width="7" height="1" fill="#919191"/><rect x="1" y="8" width="7" height="1" fill="#919191"/><rect x="0" y="1" width="1" height="7" fill="#919191"/><rect x="8" y="1" width="1" height="7" fill="#919191"/><rect x="0" y="0" width="1" height="1" fill="#c9c9c9"/><rect x="8" y="0" width="1" height="1" fill="#c9c9c9"/><rect x="0" y="8" width="1" height="1" fill="#c9c9c9"/><rect x="8" y="8" width="1" height="1" fill="#c9c9c9"/><rect x="2" y="4" width="5" height="1" fill="#4a61b5"/><rect x="4" y="2" width="1" height="5" fill="#1f3a80"/></svg>
<div class="dv" style="left:35px;top:552px;height:4px"></div>
<div class="dh" style="left:41px;top:560px;width:6px"></div>
<div class="btn" style="left:54px;top:585px;width:115px;background:#cccccc;border-color:#bfbfbf;color:#838383;text-indent:-2px;">Insert in Script</div>

<!-- right panel (editor) -->
<div style="left:206px;top:607px;width:559px;height:1px;background:#fff;"></div>
<div style="left:764px;top:177px;width:1px;height:431px;background:#fff;"></div>
<div style="left:206px;top:177px;width:558px;height:1px;background:#696969;"></div>
<div style="left:206px;top:177px;width:1px;height:430px;background:#696969;"></div>
<div style="left:212px;top:183px;width:547px;height:21px;border:1px solid #a0a4ad;background:#f0f0f0;"></div>
<div style="left:212px;top:209px;width:547px;height:370px;border:1px solid #828790;background:#f0f0f0;"></div>
<div style="left:213px;top:210px;width:21px;height:351px;background:#fff;"></div>
<div style="left:234px;top:210px;width:1px;height:351px;background:#dddddd;"></div>
<div style="left:235px;top:210px;width:507px;height:352px;background:#fff;overflow:hidden;">
  <div style="left:0;top:2px;width:506px;height:16px;background:#ffffaa;"></div>
  <div class="mono" style="left:2px;top:2px;">
<div class="cl"><span class="c"># runScript() script is the entry point that is called during the comput</span></div>
<div class="cl"><span class="c">#</span></div>
<div class="cl"><span class="c"># randomValue is the standard uniform number sampled in the ResSim compu</span></div>
<div class="cl"></div>
<div class="cl"><span class="k">def</span> runScript<span class="p">(</span>randomVal, mcData<span class="p">)</span> <span class="o">:</span></div>
<div class="cl"></div>
<div class="cl">    <span class="c">#name, location and parameter</span></div>
<div class="cl">    name <span class="o">=</span> <span class="s">&quot;myScriptedMCVariable&quot;</span></div>
<div class="cl">    location <span class="o">=</span> <span class="s">&quot;Fishs Eddy&quot;</span></div>
<div class="cl">    parameter <span class="o">=</span> <span class="s">&quot;Stage&quot;</span></div>
<div class="cl"></div>
<div class="cl">    <span class="c">#add your code here</span></div>
<div class="cl"></div>
<div class="cl"></div>
<div class="cl"></div>
<div class="cl">    <span class="c">#change the scriptVal to the desired output</span></div>
<div class="cl">    scriptVal <span class="o">=</span> randomVal</div>
<div class="cl"></div>
<div class="cl">    <span class="c">#return the operation value</span></div>
<div class="cl">    <span class="k">return</span> scriptVal</div>
<div class="cl"></div>
  </div>
</div>
<div class="mono" style="left:213px;top:212px;width:17px;">
<div class="ln">1</div>
<div class="ln">2</div>
<div class="ln">3</div>
<div class="ln">4</div>
<div class="ln">5</div>
<div class="ln">6</div>
<div class="ln">7</div>
<div class="ln">8</div>
<div class="ln">9</div>
<div class="ln">10</div>
<div class="ln">11</div>
<div class="ln">12</div>
<div class="ln">13</div>
<div class="ln">14</div>
<div class="ln">15</div>
<div class="ln">16</div>
<div class="ln">17</div>
<div class="ln">18</div>
<div class="ln">19</div>
<div class="ln">20</div>
<div class="ln">21</div>
</div>
<!-- vertical scrollbar -->
<div style="left:742px;top:210px;width:16px;height:352px;background:#f0f0f0;"></div>
<div style="left:742px;top:227px;width:15px;height:275px;background:#cdcdcd;"></div>
<svg style="left:741px;top:210px" width="17" height="17" viewBox="0 0 17 17"><polygon points="4.70,10.00 8.50,5.80 12.30,10.00 11.20,12.10 8.50,9.30 5.80,12.10" fill="#595959"/></svg>
<svg style="left:741px;top:544px" width="17" height="17" viewBox="0 0 17 17"><polygon points="4.70,7.90 8.50,12.10 12.30,7.90 11.20,5.80 8.50,8.60 5.80,5.80" fill="#595959"/></svg>
<!-- horizontal scrollbar -->
<div style="left:252px;top:562px;width:448px;height:15px;background:#cdcdcd;"></div>
<svg style="left:235px;top:561px" width="17" height="17" viewBox="0 0 17 17"><polygon points="9.10,4.80 4.90,8.60 9.10,12.40 11.20,11.30 8.40,8.60 11.20,5.90" fill="#595959"/></svg>
<svg style="left:724px;top:561px" width="17" height="17" viewBox="0 0 17 17"><polygon points="7.90,4.70 12.10,8.50 7.90,12.30 5.80,11.20 8.60,8.50 5.80,5.80" fill="#595959"/></svg>

<div class="btn" style="left:213px;top:585px;width:115px;">Compile Script</div>

<!-- separator + wizard buttons -->
<div style="left:6px;top:618px;width:774px;height:1px;background:#a0a0a0;"></div>
<div style="left:6px;top:619px;width:774px;height:1px;background:#f8f8f8;"></div>
<div class="btn" style="left:546px;top:630px;width:73px;letter-spacing:-0.2px;text-indent:-1px;">&lt; Back</div>
<div class="btn" style="left:621px;top:630px;width:65px;border:1px solid #0078d7;background:#e5f1fb;">Finish</div>
<div class="dh" style="left:623px;top:632px;width:61px;--c:#000;"></div>
<div class="dh" style="left:623px;top:648px;width:61px;--c:#000;"></div>
<div class="dv" style="left:623px;top:632px;height:17px;--c:#000;"></div>
<div class="dv" style="left:683px;top:632px;height:17px;--c:#000;"></div>
<div class="btn" style="left:708px;top:630px;width:71px;text-indent:-1px;">Cancel</div>
</body></html>
